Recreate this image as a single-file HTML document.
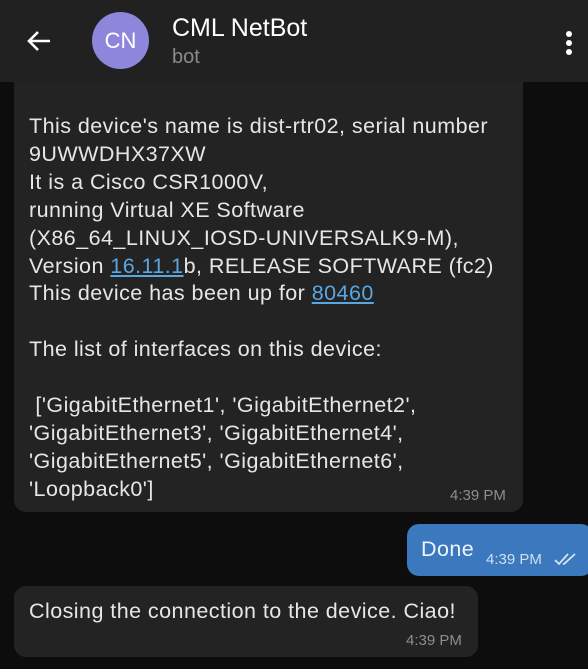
<!DOCTYPE html>
<html><head><meta charset="utf-8"><style>
*{margin:0;padding:0;box-sizing:border-box}
body{width:588px;height:669px;background:#0d0d0d;font-family:"Liberation Sans",sans-serif;overflow:hidden;position:relative;color:#e8e8e8}
.hdr{position:absolute;left:0;top:0;width:588px;height:82px;background:#212121}
.av{position:absolute;left:92px;top:12px;width:57px;height:57px;border-radius:50%;background:#8e86dc;color:#fff;font-size:22px;text-align:center;line-height:57px}
.name{position:absolute;left:172px;top:14px;font-size:25px;color:#fff}
.sub{position:absolute;left:172px;top:46px;font-size:20px;color:#8a8a8a}
.b{position:absolute;background:#232323;border-radius:12px}
.t{position:absolute;font-size:21.5px;letter-spacing:0.45px;line-height:27.9px;white-space:pre;color:#e6e6e6}
.ts{position:absolute;font-size:15px;color:#8d8d8d}
a{color:#5aa6e0;text-decoration:underline}
</style></head><body>
<div class="b" style="left:14px;top:70px;width:509px;height:442px;border-radius:0 0 12px 12px"></div>
<div class="hdr">
<svg style="position:absolute;left:26px;top:30px" width="26" height="22" viewBox="0 0 26 22"><path d="M24 11H3M12 2L3 11l9 9" stroke="#fff" stroke-width="2.6" fill="none"/></svg>
<div class="av">CN</div>
<div class="name">CML NetBot</div>
<div class="sub">bot</div>
<svg style="position:absolute;left:565px;top:30px" width="8" height="26"><circle cx="4" cy="4" r="3" fill="#fff"/><circle cx="4" cy="13" r="3" fill="#fff"/><circle cx="4" cy="22" r="3" fill="#fff"/></svg>
</div>
<div class="t" style="left:29px;top:113px">This device's name is dist-rtr02, serial number
9UWWDHX37XW
It is a Cisco CSR1000V,
running Virtual XE Software
(X86_64_LINUX_IOSD-UNIVERSALK9-M),
Version <a>16.11.1</a>b, RELEASE SOFTWARE (fc2)
This device has been up for <a>80460</a>

The list of interfaces on this device:

 ['GigabitEthernet1', 'GigabitEthernet2',
'GigabitEthernet3', 'GigabitEthernet4',
'GigabitEthernet5', 'GigabitEthernet6',
'Loopback0']</div>
<div class="ts" style="left:450px;top:487px">4:39 PM</div>
<div class="b" style="left:407px;top:524px;width:186px;height:52px;background:#3b78be"></div>
<div class="t" style="left:421px;top:536px;color:#eef4fb">Done</div>
<div class="ts" style="left:486px;top:551px;color:#cfe0f3">4:39 PM</div>
<svg style="position:absolute;left:553px;top:552px" width="26" height="14" viewBox="0 0 26 14"><path d="M2 8l4 4 9-10M10 12l1 0 11-10" stroke="#d6e6f6" stroke-width="1.8" fill="none"/></svg>
<div class="b" style="left:14px;top:586px;width:464px;height:71px"></div>
<div class="t" style="left:29px;top:598px">Closing the connection to the device. Ciao!</div>
<div class="ts" style="left:406px;top:632px">4:39 PM</div>
</body></html>
